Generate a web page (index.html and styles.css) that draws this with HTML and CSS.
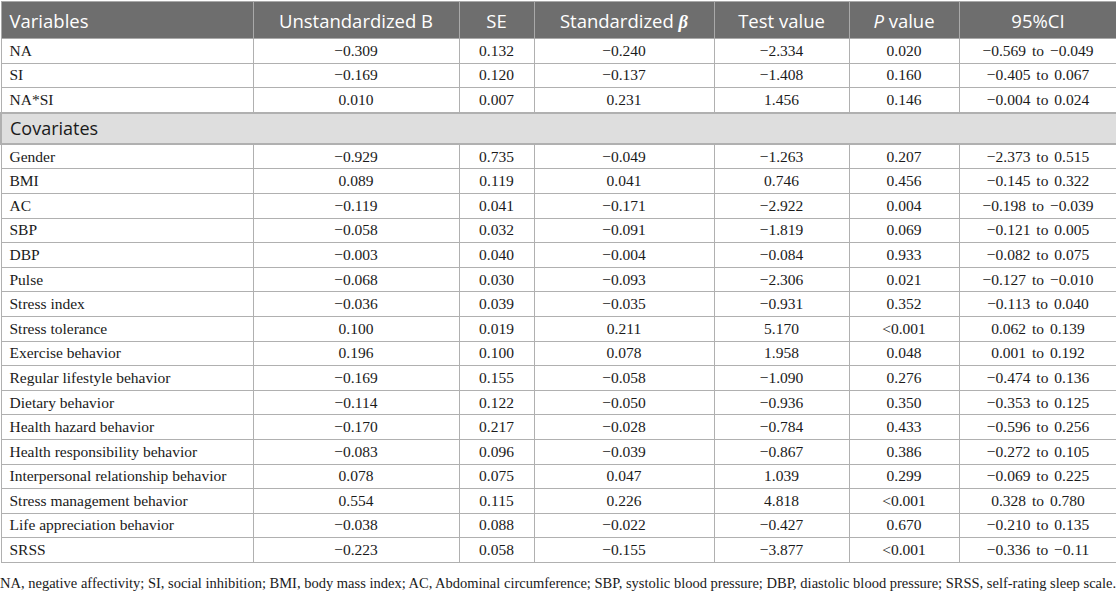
FILE: index.html
```html
<!DOCTYPE html>
<html lang="en">

<head>
    <meta charset="UTF-8">
    <title>Regression Results</title>
    <link rel="stylesheet" href="styles.css">
</head>

<body>
    <table class="results">
        <colgroup>
            <col class="c-var">
            <col class="c-b">
            <col class="c-se">
            <col class="c-beta">
            <col class="c-test">
            <col class="c-p">
            <col class="c-ci">
        </colgroup>
        <thead>
            <tr>
                <th class="left">Variables</th>
                <th>Unstandardized B</th>
                <th>SE</th>
                <th>Standardized <span class="beta">β</span></th>
                <th>Test value</th>
                <th><i>P</i> value</th>
                <th>95%CI</th>
            </tr>
        </thead>
        <tbody>
            <tr><td>NA</td><td>−0.309</td><td>0.132</td><td>−0.240</td><td>−2.334</td><td>0.020</td><td>−0.569 to −0.049</td></tr>
            <tr><td>SI</td><td>−0.169</td><td>0.120</td><td>−0.137</td><td>−1.408</td><td>0.160</td><td>−0.405 to 0.067</td></tr>
            <tr><td>NA*SI</td><td>0.010</td><td>0.007</td><td>0.231</td><td>1.456</td><td>0.146</td><td>−0.004 to 0.024</td></tr>
            <tr class="group"><td colspan="7">Covariates</td></tr>
            <tr><td>Gender</td><td>−0.929</td><td>0.735</td><td>−0.049</td><td>−1.263</td><td>0.207</td><td>−2.373 to 0.515</td></tr>
            <tr><td>BMI</td><td>0.089</td><td>0.119</td><td>0.041</td><td>0.746</td><td>0.456</td><td>−0.145 to 0.322</td></tr>
            <tr><td>AC</td><td>−0.119</td><td>0.041</td><td>−0.171</td><td>−2.922</td><td>0.004</td><td>−0.198 to −0.039</td></tr>
            <tr><td>SBP</td><td>−0.058</td><td>0.032</td><td>−0.091</td><td>−1.819</td><td>0.069</td><td>−0.121 to 0.005</td></tr>
            <tr><td>DBP</td><td>−0.003</td><td>0.040</td><td>−0.004</td><td>−0.084</td><td>0.933</td><td>−0.082 to 0.075</td></tr>
            <tr><td>Pulse</td><td>−0.068</td><td>0.030</td><td>−0.093</td><td>−2.306</td><td>0.021</td><td>−0.127 to −0.010</td></tr>
            <tr><td>Stress index</td><td>−0.036</td><td>0.039</td><td>−0.035</td><td>−0.931</td><td>0.352</td><td>−0.113 to 0.040</td></tr>
            <tr><td>Stress tolerance</td><td>0.100</td><td>0.019</td><td>0.211</td><td>5.170</td><td>&lt;0.001</td><td>0.062 to 0.139</td></tr>
            <tr><td>Exercise behavior</td><td>0.196</td><td>0.100</td><td>0.078</td><td>1.958</td><td>0.048</td><td>0.001 to 0.192</td></tr>
            <tr><td>Regular lifestyle behavior</td><td>−0.169</td><td>0.155</td><td>−0.058</td><td>−1.090</td><td>0.276</td><td>−0.474 to 0.136</td></tr>
            <tr><td>Dietary behavior</td><td>−0.114</td><td>0.122</td><td>−0.050</td><td>−0.936</td><td>0.350</td><td>−0.353 to 0.125</td></tr>
            <tr><td>Health hazard behavior</td><td>−0.170</td><td>0.217</td><td>−0.028</td><td>−0.784</td><td>0.433</td><td>−0.596 to 0.256</td></tr>
            <tr><td>Health responsibility behavior</td><td>−0.083</td><td>0.096</td><td>−0.039</td><td>−0.867</td><td>0.386</td><td>−0.272 to 0.105</td></tr>
            <tr><td>Interpersonal relationship behavior</td><td>0.078</td><td>0.075</td><td>0.047</td><td>1.039</td><td>0.299</td><td>−0.069 to 0.225</td></tr>
            <tr><td>Stress management behavior</td><td>0.554</td><td>0.115</td><td>0.226</td><td>4.818</td><td>&lt;0.001</td><td>0.328 to 0.780</td></tr>
            <tr><td>Life appreciation behavior</td><td>−0.038</td><td>0.088</td><td>−0.022</td><td>−0.427</td><td>0.670</td><td>−0.210 to 0.135</td></tr>
            <tr><td>SRSS</td><td>−0.223</td><td>0.058</td><td>−0.155</td><td>−3.877</td><td>&lt;0.001</td><td>−0.336 to −0.11</td></tr>
        </tbody>
    </table>

    <p class="note">NA, negative affectivity; SI, social inhibition; BMI, body mass index; AC, Abdominal circumference; SBP, systolic blood pressure; DBP, diastolic blood pressure; SRSS, self-rating sleep scale.</p>
</body>

</html>
```

FILE: styles.css
```css
/* Global Styles */
body {
    margin: 0;
    padding: 0;
    background: white;
    color: #1a1a1a;
    font-family: 'Liberation Serif', serif;
}

/* Results Table */
.results {
    width: 1116px;
    border-collapse: collapse;
    table-layout: fixed;
    margin-top: 1px;
}

.c-var { width: 252px; }
.c-b { width: 206px; }
.c-se { width: 75px; }
.c-beta { width: 180px; }
.c-test { width: 135px; }
.c-p { width: 110px; }
.c-ci { width: 158px; }

.results th {
    background: #6e6e6e;
    color: white;
    font-family: 'Open Sans', sans-serif;
    font-weight: normal;
    font-size: 18.5px;
    height: 36px;
    padding: 0 8px;
    text-align: center;
    border: 1px solid #a9a9a9;
    white-space: nowrap;
}

.results th.left {
    text-align: left;
}

.beta {
    font-family: 'Liberation Serif', serif;
    font-weight: bold;
    font-style: italic;
}

.results td {
    font-size: 15.5px;
    height: 23.6px;
    padding: 0 8px;
    line-height: 18px;
    text-align: center;
    border: 1px solid #b0b0b0;
    white-space: nowrap;
}

.results td:first-child {
    text-align: left;
}

/* wider gaps around "to" in the interval column */
.results td:last-child {
    word-spacing: 2px;
}

/* Covariates group row */
.results tr.group td {
    background: #dedede;
    font-family: 'Open Sans', sans-serif;
    font-size: 18px;
    height: 29px;
    border: 2px solid #b0b0b0;
    word-spacing: normal;
}

.note {
    margin: 12px 0 0;
    font-size: 14.5px;
    white-space: nowrap;
}
```
